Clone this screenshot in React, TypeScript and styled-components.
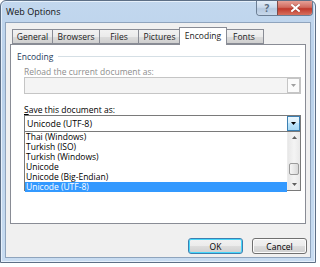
import React from "react";
import styled, { createGlobalStyle } from "styled-components";

const Global = createGlobalStyle`
  html, body { margin: 0; padding: 0; background: #ffffff; }
  body { font-family: "Open Sans", "Noto Sans", sans-serif; font-size: 8.5px; color: #000; }
  * { box-sizing: border-box; }
`;

const Window = styled.div`
  width: 316px;
  height: 263px;
  border: 1px solid #5d6f86;
  border-radius: 6px 6px 0 0;
  background: linear-gradient(180deg, #c2d7ee 0%, #b9d1ea 30%, #c8dcf1 100%);
  display: flex;
  flex-direction: column;
  box-shadow: inset 0 0 0 1px #e6f0fb;
`;

const TitleBar = styled.div`
  height: 21px;
  display: flex;
  align-items: flex-start;
  padding-left: 5px;
  padding-right: 2px;
`;

const Title = styled.div`
  font-size: 9px;
  line-height: 21px;
  color: #111;
  flex: 1;
`;

const CaptionButtons = styled.div`
  display: flex;
  height: 15px;
  border: 1px solid #6c7e94;
  border-top: none;
  border-radius: 0 0 4px 4px;
  overflow: hidden;
`;

const CaptionButton = styled.div<{ $close?: boolean }>`
  width: ${(p) => (p.$close ? 35 : 20)}px;
  height: 100%;
  display: flex;
  align-items: center;
  justify-content: center;
  font-size: 10px;
  font-weight: bold;
  color: ${(p) => (p.$close ? "#fff" : "#5a6b80")};
  background: ${(p) =>
    p.$close
      ? "linear-gradient(180deg, #e6a096 0%, #d16b5e 45%, #c0392b 55%, #d6705e 100%)"
      : "linear-gradient(180deg, #e3edf8 0%, #c9d9ec 45%, #b5c8df 55%, #c8d8ea 100%)"};
  border-left: ${(p) => (p.$close ? "1px solid #7e4a48" : "none")};
`;

const Client = styled.div`
  margin: 0 4px;
  height: 236px;
  background: #f0f0f0;
  border: 1px solid #8fa4bd;
  padding: 5px 4px 0 4px;
  display: flex;
  flex-direction: column;
`;

const TabRow = styled.div`
  height: 16px;
  display: flex;
  align-items: flex-end;
  padding-left: 2px;
  position: relative;
  z-index: 1;
`;

const Tab = styled.div<{ $w: number; $active?: boolean; $first?: boolean }>`
  width: ${(p) => p.$w}px;
  height: ${(p) => (p.$active ? 18 : 15)}px;
  margin-left: ${(p) => (p.$active ? -2 : 0)}px;
  margin-right: ${(p) => (p.$active ? -2 : 0)}px;
  margin-bottom: ${(p) => (p.$active ? -1 : 0)}px;
  border: 1px solid #898c95;
  border-bottom: ${(p) => (p.$active ? "none" : "1px solid #898c95")};
  border-left-width: ${(p) => (p.$first || p.$active ? 1 : 0)}px;
  background: ${(p) =>
    p.$active ? "#ffffff" : "linear-gradient(180deg, #f2f2f2 0%, #ebebeb 50%, #dddddd 51%, #cfcfcf 100%)"};
  display: flex;
  align-items: center;
  justify-content: center;
  font-size: 8.5px;
  line-height: 12px;
  color: #1a1a1a;
  padding-bottom: ${(p) => (p.$active ? 2 : 0)}px;
  position: relative;
  z-index: ${(p) => (p.$active ? 2 : 1)};
`;

const Panel = styled.div`
  height: 180px;
  background: #ffffff;
  border: 1px solid #898c95;
  padding: 5px 5px 0 6px;
  display: flex;
  flex-direction: column;
`;

const GroupHeader = styled.div`
  display: flex;
  align-items: center;
  height: 12px;
  gap: 5px;
  color: #1e395b;
  font-size: 8.5px;
`;

const GroupLine = styled.div`
  flex: 1;
  height: 1px;
  background: #d5dfe5;
`;

const GroupBody = styled.div`
  padding-left: 7px;
  margin-right: -1px;
  display: flex;
  flex-direction: column;
`;

const Label = styled.div<{ $disabled?: boolean; $top: number }>`
  margin-top: ${(p) => p.$top}px;
  line-height: 11px;
  height: 11px;
  font-size: 8.5px;
  color: ${(p) => (p.$disabled ? "#8d8d8d" : "#000")};
  u { text-decoration: underline; text-underline-offset: 1px; }
`;

const Combo = styled.div<{ $disabled?: boolean }>`
  height: 17px;
  display: flex;
  align-items: center;
  border: 1px solid ${(p) => (p.$disabled ? "#c5c5c5" : "#7a7a7a")};
  background: ${(p) => (p.$disabled ? "#f4f4f4" : "#ffffff")};
  position: relative;
  z-index: 1;
`;

const ComboText = styled.div`
  flex: 1;
  padding-left: 2px;
  font-size: 8.8px;
  line-height: 12px;
`;

const DropButton = styled.div<{ $hot?: boolean }>`
  width: 13px;
  height: 15px;
  display: flex;
  align-items: center;
  justify-content: center;
  border: 1px solid ${(p) => (p.$hot ? "#3c7fb1" : "#c5c5c5")};
  background: ${(p) =>
    p.$hot
      ? "linear-gradient(180deg, #eaf6fd 0%, #d9f0fc 45%, #bee6fd 50%, #a7d9f5 100%)"
      : "#fbfbfb"};
`;

const ListBox = styled.div`
  margin-top: -1px;
  height: 60px;
  border: 1px solid #7a7a7a;
  background: #fff;
  display: flex;
`;

const Items = styled.div`
  flex: 1;
  display: flex;
  flex-direction: column;
`;

const Item = styled.div<{ $selected?: boolean }>`
  height: 10px;
  line-height: 10px;
  padding-left: 1px;
  font-size: 8.5px;
  white-space: nowrap;
  background: ${(p) => (p.$selected ? "#3399ff" : "transparent")};
  color: ${(p) => (p.$selected ? "#fff" : "#000")};
`;

const ScrollBar = styled.div`
  width: 13px;
  display: flex;
  flex-direction: column;
  align-items: center;
  background: linear-gradient(90deg, #e7e7e7 0%, #f4f4f4 50%, #e9e9e9 100%);
  border-left: 1px solid #ececec;
`;

const ScrollArrow = styled.div`
  height: 11px;
  width: 100%;
  display: flex;
  align-items: center;
  justify-content: center;
`;

const Track = styled.div`
  flex: 1;
  width: 100%;
  display: flex;
  flex-direction: column;
  justify-content: flex-end;
  padding-bottom: 4px;
`;

const Thumb = styled.div`
  height: 12px;
  margin: 0 1px;
  border: 1px solid #9a9a9a;
  border-radius: 2px;
  background: linear-gradient(90deg, #f5f5f5 0%, #e8e8e8 50%, #d9d9d9 100%);
`;

const ButtonRow = styled.div`
  margin-top: 14px;
  display: flex;
  justify-content: flex-end;
  gap: 9px;
  margin-right: -1px;
`;

const Button = styled.div<{ $default?: boolean }>`
  width: 55px;
  height: 16px;
  display: flex;
  align-items: center;
  justify-content: center;
  font-size: 8.5px;
  border: 1px solid ${(p) => (p.$default ? "#3c7fb1" : "#707070")};
  border-radius: 3px;
  background: linear-gradient(180deg, #f2f2f2 0%, #ebebeb 50%, #dddddd 51%, #cfcfcf 100%);
  box-shadow: ${(p) => (p.$default ? "inset 0 0 0 1px #48d8fb" : "inset 0 0 0 1px #fcfcfc")};
`;

const Tri = ({ color }: { color: string }) => (
  <svg width="5" height="3" viewBox="0 0 5 3">
    <path d="M0 0 H5 L2.5 3 Z" fill={color} />
  </svg>
);

const TriUp = ({ color }: { color: string }) => (
  <svg width="5" height="3" viewBox="0 0 5 3">
    <path d="M0 3 H5 L2.5 0 Z" fill={color} />
  </svg>
);

const tabs = [
  { label: "General", w: 41 },
  { label: "Browsers", w: 47 },
  { label: "Files", w: 39 },
  { label: "Pictures", w: 42 },
  { label: "Encoding", w: 48, active: true },
  { label: "Fonts", w: 39 },
];

const items = [
  "Thai (Windows)",
  "Turkish (ISO)",
  "Turkish (Windows)",
  "Unicode",
  "Unicode (Big-Endian)",
  "Unicode (UTF-8)",
];

export default function App() {
  return (
    <>
      <Global />
      <Window>
        <TitleBar>
          <Title>Web Options</Title>
          <CaptionButtons>
            <CaptionButton>?</CaptionButton>
            <CaptionButton $close>
              <svg width="9" height="8" viewBox="0 0 9 8">
                <path d="M1 1 L8 7 M8 1 L1 7" stroke="#4a1c18" strokeWidth="3" strokeLinecap="square" opacity="0.35" />
                <path d="M1 1 L8 7 M8 1 L1 7" stroke="#ffffff" strokeWidth="2" strokeLinecap="square" />
              </svg>
            </CaptionButton>
          </CaptionButtons>
        </TitleBar>
        <Client>
          <TabRow>
            {tabs.map((t, i) => (
              <Tab key={t.label} $w={t.w} $active={t.active} $first={i === 0}>
                {t.label}
              </Tab>
            ))}
          </TabRow>
          <Panel>
            <GroupHeader>
              <span>Encoding</span>
              <GroupLine />
            </GroupHeader>
            <GroupBody>
              <Label $disabled $top={4}>Reload the current document as:</Label>
              <Combo $disabled>
                <ComboText />
                <DropButton>
                  <Tri color="#a0a0a0" />
                </DropButton>
              </Combo>
              <Label $top={10}>
                <u>S</u>ave this document as:
              </Label>
              <Combo>
                <ComboText>Unicode (UTF-8)</ComboText>
                <DropButton $hot>
                  <Tri color="#000" />
                </DropButton>
              </Combo>
              <ListBox>
                <Items>
                  {items.map((it, i) => (
                    <Item key={it} $selected={i === items.length - 1}>
                      {it}
                    </Item>
                  ))}
                </Items>
                <ScrollBar>
                  <ScrollArrow>
                    <TriUp color="#606060" />
                  </ScrollArrow>
                  <Track>
                    <Thumb />
                  </Track>
                  <ScrollArrow>
                    <Tri color="#606060" />
                  </ScrollArrow>
                </ScrollBar>
              </ListBox>
            </GroupBody>
          </Panel>
          <ButtonRow>
            <Button $default>OK</Button>
            <Button>Cancel</Button>
          </ButtonRow>
        </Client>
      </Window>
    </>
  );
}
